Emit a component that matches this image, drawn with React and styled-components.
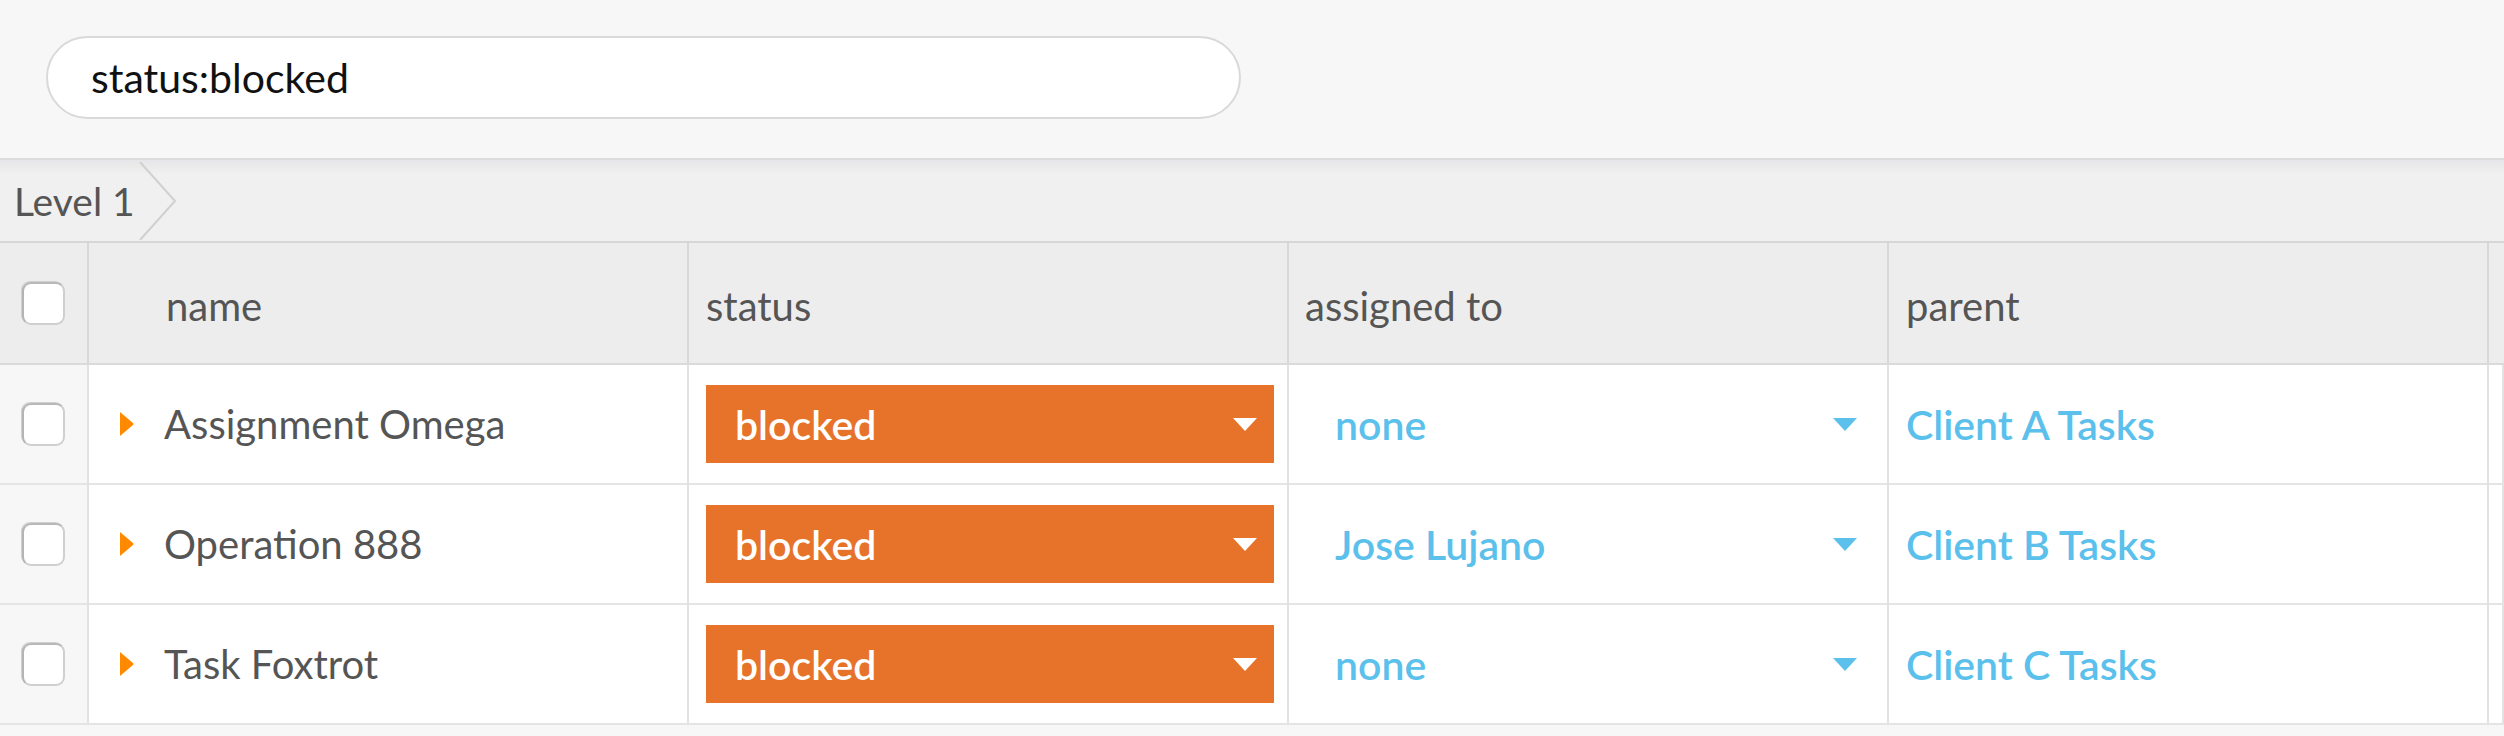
import React from 'react';
import styled, { createGlobalStyle } from 'styled-components';

const GlobalStyle = createGlobalStyle`
    body {
        margin: 0;
        background: #f7f7f7;
        font-family: Lato, "Liberation Sans", sans-serif;
    }
`

const rows = [
    { name: 'Assignment Omega', status: 'blocked', assigned: 'none', parent: 'Client A Tasks' },
    { name: 'Operation 888', status: 'blocked', assigned: 'Jose Lujano', parent: 'Client B Tasks' },
    { name: 'Task Foxtrot', status: 'blocked', assigned: 'none', parent: 'Client C Tasks' },
];

const DownCaret = () => (
    <svg width="24" height="13" viewBox="0 0 24 13">
        <polygon points="0,0 24,0 12,13" fill="currentColor" />
    </svg>
)

const RightCaret = () => (
    <svg width="14" height="24" viewBox="0 0 14 24">
        <path d="M0,0 L13,11 Q14,12 13,13 L0,24 Z" fill="#ff8a00" />
    </svg>
)

export default function App() {
    return (<>
        <GlobalStyle />
        <Page>
            <TopBar>
                <Search type="text" defaultValue="status:blocked" />
            </TopBar>
            <Breadcrumbs>
                <Crumb>Level 1</Crumb>
                <svg width="38" height="78" viewBox="0 0 38 78">
                    <polyline points="1,0 36,39 1,78" fill="none" stroke="#d0d0d0" strokeWidth="2" />
                </svg>
            </Breadcrumbs>
            <Table>
                <Row $header>
                    <CheckCell $header><Checkbox /></CheckCell>
                    <HeadCell $indent={77}>name</HeadCell>
                    <HeadCell>status</HeadCell>
                    <HeadCell $indent={16}>assigned to</HeadCell>
                    <HeadCell>parent</HeadCell>
                    <HeadCell />
                </Row>
                {rows.map((row) => (
                    <Row key={row.name}>
                        <CheckCell><Checkbox /></CheckCell>
                        <NameCell>
                            <RightCaret />
                            <span>{row.name}</span>
                        </NameCell>
                        <Cell>
                            <Select $filled>
                                <span>{row.status}</span>
                                <DownCaret />
                            </Select>
                        </Cell>
                        <Cell>
                            <Select>
                                <span>{row.assigned}</span>
                                <DownCaret />
                            </Select>
                        </Cell>
                        <LinkCell>{row.parent}</LinkCell>
                        <Cell />
                    </Row>
                ))}
            </Table>
        </Page>
    </>
    )
}

const Page = styled.div`
    width: 2504px;
    overflow: hidden;
`

const TopBar = styled.div`
    height: 160px;
    box-sizing: border-box;
    border-bottom: 2px solid #dcdcdc;
    background: #f7f7f7;
    display: flex;
    align-items: center;
    padding: 0 0 3px 46px;
`

const Search = styled.input`
    width: 1195px;
    height: 83px;
    box-sizing: border-box;
    border: 2px solid #d9d9d9;
    border-radius: 42px;
    background: #fff;
    padding: 0 43px;
    font-family: Lato, "Liberation Sans", sans-serif;
    font-size: 41px;
    color: #111;
    outline: none;
`

const Breadcrumbs = styled.div`
    height: 83px;
    box-sizing: border-box;
    border-bottom: 2px solid #d6d6d6;
    background: linear-gradient(#e6e6e8, #f0f0f0 14px);
    display: flex;
    align-items: center;
    padding-left: 14px;
`

const Crumb = styled.div`
    font-size: 39px;
    color: #555;
    margin-right: 4px;
`

const Table = styled.div`
    display: flex;
    flex-direction: column;
`

const Row = styled.div`
    display: grid;
    grid-template-columns: 89px repeat(4, 600px) 1fr;
    height: ${p => p.$header ? 122 : 120}px;
    box-sizing: border-box;
    border-bottom: 2px solid ${p => p.$header ? '#dadada' : '#e4e4e4'};
    background: ${p => p.$header ? '#ededed' : '#fff'};
`

const Cell = styled.div`
    display: flex;
    align-items: center;
    box-sizing: border-box;
    border-right: 2px solid #e2e2e2;
    font-size: 40px;
    color: #555;
    min-width: 0;
`

const HeadCell = styled(Cell)`
    border-right-color: #d8d8d8;
    padding: 6px 0 0 ${p => p.$indent || 17}px;
`

const CheckCell = styled(Cell)`
    justify-content: center;
    background: ${p => p.$header ? '#ededed' : '#f7f7f7'};
    border-right-color: ${p => p.$header ? '#d8d8d8' : '#e2e2e2'};
`

const Checkbox = styled.div`
    width: 43px;
    height: 43px;
    box-sizing: border-box;
    background: #fff;
    border: 2px solid #cfcfcf;
    border-left-color: #b4b4b4;
    border-top-color: #b8b8b8;
    border-radius: 9px;
    box-shadow: -1px -1px 0 #d0d0d0;
`

const NameCell = styled(Cell)`
    padding-left: 31px;
    gap: 30px;
`

const Select = styled.div`
    flex: 1;
    height: 78px;
    margin: 0 13px 0 17px;
    display: flex;
    align-items: center;
    justify-content: space-between;
    padding: 0 17px 0 29px;
    background: ${p => p.$filled ? '#e77229' : 'transparent'};
    color: ${p => p.$filled ? '#fff' : '#5bc0eb'};
    font-size: 41px;
    font-weight: 600;
`

const LinkCell = styled(Cell)`
    padding-left: 17px;
    color: #5bc0eb;
    font-size: 41px;
    font-weight: 600;
`
